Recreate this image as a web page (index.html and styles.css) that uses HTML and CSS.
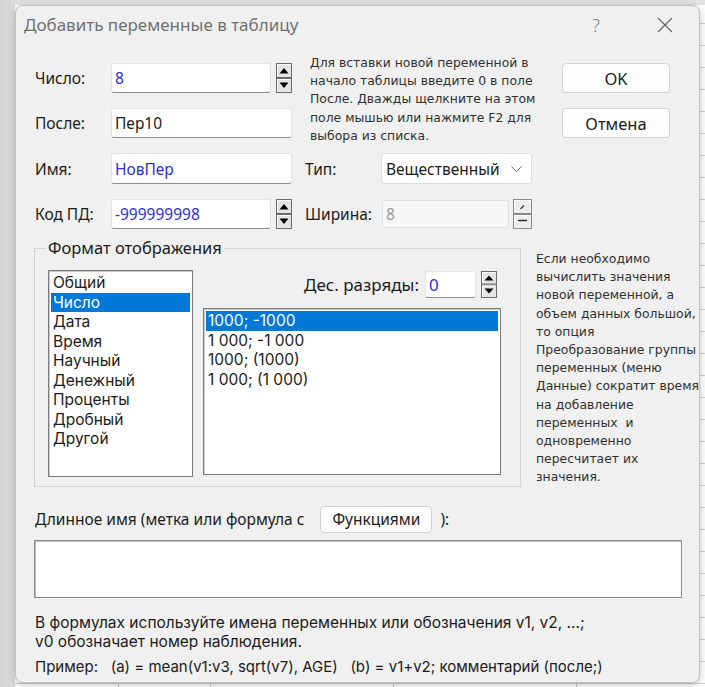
FILE: index.html
```html
<!DOCTYPE html>
<html lang="ru">
<head>
<meta charset="utf-8">
<title>Добавить переменные в таблицу</title>
<link rel="stylesheet" href="styles.css">
</head>
<body>
<div class="screen">
  <div class="dialog">
    <div class="titlebar">
      <span class="title">Добавить переменные в таблицу</span>
      <span class="help">?</span>
      <span class="close"><svg width="16" height="16" viewBox="0 0 16 16"><path d="M1 1L15 15M15 1L1 15" stroke="#606060" stroke-width="1.1" fill="none"/></svg></span>
    </div>

    <div class="top-grid">
      <div class="lbl c1">Число:</div>
      <div class="field c2">
        <div class="tb spin-tb blue">8</div>
        <svg class="spin" width="16" height="30" viewBox="0 0 16 30"><rect x="0.5" y="0.5" width="15" height="14" fill="#e4e4e4" stroke="#6a6a6a"/><rect x="0.5" y="15.5" width="15" height="14" fill="#e4e4e4" stroke="#6a6a6a"/><path d="M1.5 1.5H14.5M1.5 1.5V13.5M1.5 16.5H14.5M1.5 16.5V28.5" stroke="#fff"/><path d="M3.5 10.5h9L8 5z" fill="#000"/><path d="M3.5 19.5h9L8 25z" fill="#000"/></svg>
      </div>
      <div class="info top-info">Для вставки новой переменной в<br>начало таблицы введите 0 в поле<br>После. Дважды щелкните на этом<br>поле мышью или нажмите F2 для<br>выбора из списка.</div>
      <div class="btn ok">OK</div>

      <div class="lbl c1">После:</div>
      <div class="field c2"><div class="tb wide">Пер10</div></div>
      <div class="btn cancel">Отмена</div>

      <div class="lbl c1">Имя:</div>
      <div class="field c2"><div class="tb wide blue">НовПер</div></div>
      <div class="lbl c3">Тип:</div>
      <div class="field c4"><div class="select">Вещественный<svg width="11" height="6" viewBox="0 0 11 6"><path d="M0.5 0.5L5.5 5.5L10.5 0.5" stroke="#6a6a6a" fill="none"/></svg></div></div>

      <div class="lbl c1">Код ПД:</div>
      <div class="field c2">
        <div class="tb spin-tb blue">-999999998</div>
        <svg class="spin" width="16" height="30" viewBox="0 0 16 30"><rect x="0.5" y="0.5" width="15" height="14" fill="#e4e4e4" stroke="#6a6a6a"/><rect x="0.5" y="15.5" width="15" height="14" fill="#e4e4e4" stroke="#6a6a6a"/><path d="M1.5 1.5H14.5M1.5 1.5V13.5M1.5 16.5H14.5M1.5 16.5V28.5" stroke="#fff"/><path d="M3.5 10.5h9L8 5z" fill="#000"/><path d="M3.5 19.5h9L8 25z" fill="#000"/></svg>
      </div>
      <div class="lbl c3">Ширина:</div>
      <div class="field c4">
        <div class="tb disabled">8</div>
        <svg class="spin dis" width="19" height="30" viewBox="0 0 19 30"><rect x="0.5" y="0.5" width="18" height="14" fill="#ededed" stroke="#8a8a8a"/><rect x="0.5" y="15.5" width="18" height="14" fill="#ededed" stroke="#8a8a8a"/><path d="M1.5 1.5H17.5M1.5 1.5V13.5M1.5 16.5H17.5M1.5 16.5V28.5" stroke="#fff"/><path d="M7.5 10L11 6.5" stroke="#333" stroke-width="1.2"/><path d="M5 21.5H14" stroke="#222" stroke-width="1.4"/></svg>
      </div>
    </div>

    <div class="middle">
      <fieldset class="group">
        <legend>Формат отображения</legend>
        <div class="group-body">
          <div class="list list-left">
            <div class="item">Общий</div>
            <div class="item sel">Число</div>
            <div class="item">Дата</div>
            <div class="item">Время</div>
            <div class="item">Научный</div>
            <div class="item">Денежный</div>
            <div class="item">Проценты</div>
            <div class="item">Дробный</div>
            <div class="item">Другой</div>
          </div>
          <div class="group-right">
            <div class="dec-row">
              <span class="dec-lbl">Дес. разряды:</span>
              <div class="tb dec blue">0</div>
              <svg class="spin" width="16" height="27" viewBox="0 0 16 27"><rect x="0.5" y="0.5" width="15" height="12.5" fill="#e4e4e4" stroke="#6a6a6a"/><rect x="0.5" y="14" width="15" height="12.5" fill="#e4e4e4" stroke="#6a6a6a"/><path d="M1.5 1.5H14.5M1.5 1.5V12M1.5 15H14.5M1.5 15V25.5" stroke="#fff"/><path d="M3.5 9.5h9L8 4.5z" fill="#000"/><path d="M3.5 17.5h9L8 22.5z" fill="#000"/></svg>
            </div>
            <div class="list list-right">
              <div class="item sel">1000; -1000</div>
              <div class="item">1 000; -1 000</div>
              <div class="item">1000; (1000)</div>
              <div class="item">1 000; (1 000)</div>
            </div>
          </div>
        </div>
      </fieldset>
      <div class="info side-info">Если необходимо<br>вычислить значения<br>новой переменной, а<br>объем данных большой,<br>то опция<br>Преобразование группы<br>переменных (меню<br>Данные) сократит время<br>на добавление<br>переменных&nbsp; и<br>одновременно<br>пересчитает их<br>значения.</div>
    </div>

    <div class="long-row">
      <span>Длинное имя (метка или формула с</span>
      <div class="btn fn">Функциями</div>
      <span class="close-paren">):</span>
    </div>
    <div class="textarea"></div>
    <div class="note">В формулах используйте имена переменных или обозначения v1, v2, ...;<br>v0 обозначает номер наблюдения.</div>
    <div class="note example">Пример:&nbsp;&nbsp; (a) = mean(v1:v3, sqrt(v7), AGE)&nbsp;&nbsp; (b) = v1+v2; комментарий (после;)</div>
  </div>
</div>
</body>
</html>
```

FILE: styles.css
```css
* { box-sizing: border-box; }
html, body { margin: 0; padding: 0; }
body {
  width: 705px;
  height: 687px;
  overflow: hidden;
  font-family: "Noto Sans", "Liberation Sans", sans-serif;
  background-color: #fff;
  background-image:
    linear-gradient(to right, #d3d3d3 0, #dcdcdc 15px, transparent 15px),
    linear-gradient(to bottom, #e2e2e2 0, #e2e2e2 5px, transparent 5px),
    repeating-linear-gradient(to bottom, transparent 0 21px, #cfcfcf 21px 22px),
    repeating-linear-gradient(to right, transparent 0 90.5px, #c6c6c6 90.5px 91.5px);
  background-position: 0 0, 0 0, 0 2px, 28px 0;
}
.screen { padding: 5px 5px 4px 15px; }
.dialog {
  width: 685px;
  height: 678px;
  background: #f0f0f0;
  border: 1px solid #c2c2c2;
  border-radius: 8px;
  box-shadow: 0 2px 8px rgba(0,0,0,0.22);
  display: flex;
  flex-direction: column;
  color: #1b1b1b;
  font-size: 15.5px;
}
.titlebar {
  height: 37px;
  display: flex;
  align-items: center;
  padding-left: 8px;
  padding-right: 26px;
}
.title { font-size: 17px; color: #707070; flex: 1; }
.help { font-size: 18px; color: #808080; font-weight: 300; margin-right: 57px; }
.close { display: flex; }

.top-grid {
  margin-top: 20px;
  padding-left: 19px;
  display: grid;
  grid-template-columns: 76px 194px 76px 181px 108px;
  grid-template-rows: 30px 30px 31px 30px;
  row-gap: 15px;
  align-items: center;
}
.c1 { grid-column: 1; }
.c2 { grid-column: 2; }
.c3 { grid-column: 3; }
.c4 { grid-column: 4; }
.lbl { white-space: nowrap; }
.field { display: flex; align-items: center; height: 100%; }
.tb {
  height: 100%;
  background: #fff;
  border: 1px solid #e2e2e2;
  border-bottom: 1px solid #8c8c8c;
  border-radius: 3px;
  padding-left: 3px;
  display: flex;
  align-items: center;
  white-space: nowrap;
}
.spin-tb { width: 160px; margin-right: 5px; }
.wide { width: 181px; }
.blue { color: #2f2fd8; }
.disabled { width: 127px; margin-left: 1px; margin-right: 4px; background: #f7f7f7; border-color: #e0e0e0; color: #9a9a9a; height: 28px; }
.spin { display: block; flex: none; }
.select {
  width: 151px;
  height: 100%;
  background: #fff;
  border: 1px solid #dcdcdc;
  border-radius: 3px;
  display: flex;
  align-items: center;
  justify-content: space-between;
  padding: 0 9px 0 4px;
}
.info {
  font-family: "DejaVu Sans", "Liberation Sans", sans-serif;
  font-size: 12.4px;
  line-height: 18.2px;
  color: #303030;
  white-space: nowrap;
}
.top-info {
  grid-column: 3 / 5;
  grid-row: 1 / 3;
  align-self: start;
  margin-top: -9px;
  padding-left: 5px;
}
.btn {
  background: #fdfdfd;
  border: 1px solid #d2d2d2;
  border-radius: 4px;
  display: flex;
  align-items: center;
  justify-content: center;
  white-space: nowrap;
}
.ok { grid-column: 5; grid-row: 1; height: 30px; font-size: 16.5px; }
.cancel { grid-column: 5; grid-row: 2; height: 30px; font-size: 16.5px; }

.middle {
  display: flex;
  margin-top: 9px;
  padding-left: 18px;
}
.group {
  width: 487px;
  margin: 0;
  padding: 0;
  border: 1px solid #d3d3d3;
}
.group legend {
  margin-left: 11px;
  padding: 0 2px;
  line-height: 20px;
  font-size: 16.5px;
}
.group-body {
  display: flex;
  gap: 10px;
  padding: 12px 19px 8px 13px;
}
.list {
  background: #fff;
  border: 1px solid #7c7c7c;
  box-shadow: inset 1px 1px 0 #c9c9c9;
  padding: 2px;
  font-family: Inter, "Liberation Sans", sans-serif;
  font-size: 15.5px;
}
.list-left { width: 145px; height: 207px; }
.item { line-height: 19.5px; padding-left: 2px; white-space: nowrap; }
.sel { background: #0078d7; color: #fff; }
.group-right { width: 298px; display: flex; flex-direction: column; }
.dec-row {
  height: 27px;
  margin-top: 1px;
  display: flex;
  align-items: center;
  justify-content: flex-end;
  padding-right: 4px;
}
.dec-lbl { margin-right: 6px; font-size: 17px; }
.dec { width: 51px; margin-right: 5px; font-size: 17px; }
.list-right { height: 167px; margin-top: 10px; }
.side-info { margin-left: 15px; margin-top: 12px; }

.long-row {
  margin-top: 19px;
  padding-left: 19px;
  height: 27px;
  display: flex;
  align-items: center;
}
.fn { height: 27px; width: 112px; margin-left: 16px; }
.close-paren { margin-left: 8px; }
.textarea {
  margin-top: 7px;
  margin-left: 18px;
  width: 648px;
  height: 58px;
  background: #fff;
  border: 1px solid #8a8a8a;
  box-shadow: inset 1px 1px 0 #bcbcbc;
}
.note {
  margin-top: 15px;
  padding-left: 19px;
  line-height: 19px;
  font-family: Inter, "Liberation Sans", sans-serif;
  font-size: 15.5px;
  white-space: nowrap;
}
.example { margin-top: 6px; font-size: 15px; }
```
